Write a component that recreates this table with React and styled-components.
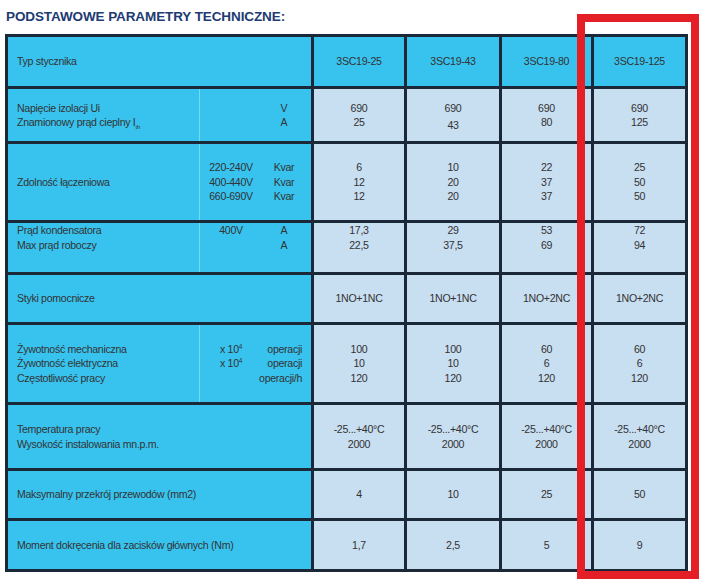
import React from "react";
import styled, { createGlobalStyle } from "styled-components";

const Global = createGlobalStyle`
  html, body { margin: 0; padding: 0; background: #fff; }
  body { font-family: "Liberation Sans", Arial, sans-serif; }
`;

const Page = styled.div`
  position: relative;
  width: 704px;
  height: 579px;
  overflow: hidden;
  background: #fff;
`;

const Title = styled.h2`
  margin: 0;
  padding: 9px 0 0 6px;
  height: 34px;
  box-sizing: border-box;
  font-family: "Liberation Sans", Arial, sans-serif;
  font-weight: 700;
  font-size: 13.5px;
  line-height: 16px;
  color: #203a72;
  letter-spacing: -0.1px;
`;

const Table = styled.div`
  margin-left: 5px;
  width: max-content;
  display: grid;
  grid-template-columns: 303px 90px 92px 89px 91px;
  grid-template-rows: 49px 52px 76px 49px 47px 77px 63px 47px 48px;
  gap: 3px;
  padding: 3px;
  background: #1b2838;
  font-family: "Liberation Sans", Arial, sans-serif;
  font-size: 10.6px;
  letter-spacing: -0.3px;
  line-height: 14.5px;
  color: #333;
`;

const LabelCell = styled.div`
  background: #38c3ef;
  display: flex;
  min-width: 0;
`;

const LabelMain = styled.div`
  flex: 0 0 ${(p) => (p.$full ? "303px" : "191px")};
  box-sizing: border-box;
  padding-left: 9px;
  display: flex;
  flex-direction: column;
  justify-content: ${(p) => (p.$top ? "flex-start" : "center")};
`;

const UnitPart = styled.div`
  flex: 1 1 0;
  min-width: 0;
  border-left: 1px solid #79d6f4;
  box-sizing: border-box;
  padding: 0 9px 0 8px;
  display: flex;
  flex-direction: column;
  justify-content: ${(p) => (p.$top ? "flex-start" : "center")};
`;

const UnitLine = styled.div`
  display: grid;
  grid-template-columns: 46px minmax(0, 1fr);
  column-gap: 12px;
  height: 14.5px;
`;

const Sub1 = styled.span`
  display: flex;
  justify-content: center;
  white-space: nowrap;
  min-width: 0;
`;

const Sub2 = styled.span`
  display: flex;
  justify-content: ${(p) => (p.$right ? "flex-end" : "center")};
  white-space: nowrap;
  min-width: 0;
`;

const ValueCell = styled.div`
  background: ${(p) => (p.$head ? "#38c3ef" : "#c8def1")};
  display: flex;
  flex-direction: column;
  align-items: center;
  justify-content: ${(p) => (p.$top ? "flex-start" : "center")};
`;

const Line = styled.div`
  height: 14.5px;
  white-space: nowrap;
  position: relative;
  top: ${(p) => (p.$drop ? "3px" : "0")};
`;

const Sup = styled.sup`
  font-size: 6.5px;
  line-height: 0;
  vertical-align: 4px;
`;

const Sub = styled.sub`
  font-size: 6px;
  line-height: 0;
  vertical-align: -3px;
`;

const Highlight = styled.div`
  position: absolute;
  left: 577px;
  top: 14px;
  width: 122px;
  height: 565px;
  box-sizing: border-box;
  border: 8px solid #e41f26;
  pointer-events: none;
`;

const X104 = (
  <span>
    x 10<Sup>4</Sup>
  </span>
);

const rows = [
  {
    head: true,
    labels: ["Typ stycznika"],
    values: [["3SC19-25"], ["3SC19-43"], ["3SC19-80"], ["3SC19-125"]],
  },
  {
    labels: [
      "Napięcie izolacji Ui",
      <>
        Znamionowy prąd cieplny I<Sub>th</Sub>
      </>,
    ],
    units: [
      ["", "V"],
      ["", "A"],
    ],
    values: [
      ["690", "25"],
      ["690", "43"],
      ["690", "80"],
      ["690", "125"],
    ],
    drop: [1, 1],
  },
  {
    labels: ["Zdolność łączeniowa"],
    units: [
      ["220-240V", "Kvar"],
      ["400-440V", "Kvar"],
      ["660-690V", "Kvar"],
    ],
    values: [
      ["6", "12", "12"],
      ["10", "20", "20"],
      ["22", "37", "37"],
      ["25", "50", "50"],
    ],
  },
  {
    top: true,
    labels: ["Prąd kondensatora", "Max prąd roboczy"],
    units: [
      ["400V", "A"],
      ["", "A"],
    ],
    values: [
      ["17,3", "22,5"],
      ["29", "37,5"],
      ["53", "69"],
      ["72", "94"],
    ],
  },
  {
    labels: ["Styki pomocnicze"],
    values: [["1NO+1NC"], ["1NO+1NC"], ["1NO+2NC"], ["1NO+2NC"]],
  },
  {
    right: true,
    labels: ["Żywotność mechaniczna", "Żywotność elektryczna", "Częstotliwość pracy"],
    units: [
      [X104, "operacji"],
      [X104, "operacji"],
      ["", "operacji/h"],
    ],
    values: [
      ["100", "10", "120"],
      ["100", "10", "120"],
      ["60", "6", "120"],
      ["60", "6", "120"],
    ],
  },
  {
    labels: ["Temperatura pracy", "Wysokość instalowania mn.p.m."],
    values: [
      ["-25...+40°C", "2000"],
      ["-25...+40°C", "2000"],
      ["-25...+40°C", "2000"],
      ["-25...+40°C", "2000"],
    ],
  },
  {
    labels: ["Maksymalny przekrój przewodów (mm2)"],
    values: [["4"], ["10"], ["25"], ["50"]],
  },
  {
    labels: ["Moment dokręcenia dla zacisków głównych (Nm)"],
    values: [["1,7"], ["2,5"], ["5"], ["9"]],
  },
];

export default function App() {
  return (
    <Page>
      <Global />
      <Title>PODSTAWOWE PARAMETRY TECHNICZNE:</Title>
      <Table>
        {rows.map((r, i) => (
          <React.Fragment key={i}>
            <LabelCell>
              <LabelMain $full={!r.units} $top={r.top}>
                {r.labels.map((l, j) => (
                  <Line key={j}>{l}</Line>
                ))}
              </LabelMain>
              {r.units && (
                <UnitPart $top={r.top}>
                  {r.units.map((u, j) => (
                    <UnitLine key={j}>
                      <Sub1>{u[0]}</Sub1>
                      <Sub2 $right={r.right}>{u[1]}</Sub2>
                    </UnitLine>
                  ))}
                </UnitPart>
              )}
            </LabelCell>
            {r.values.map((v, k) => (
              <ValueCell key={k} $head={r.head} $top={r.top}>
                {v.map((t, j) => (
                  <Line
                    key={j}
                    $drop={r.drop && r.drop[0] === k && r.drop[1] === j}
                  >
                    {t}
                  </Line>
                ))}
              </ValueCell>
            ))}
          </React.Fragment>
        ))}
      </Table>
      <Highlight />
    </Page>
  );
}
